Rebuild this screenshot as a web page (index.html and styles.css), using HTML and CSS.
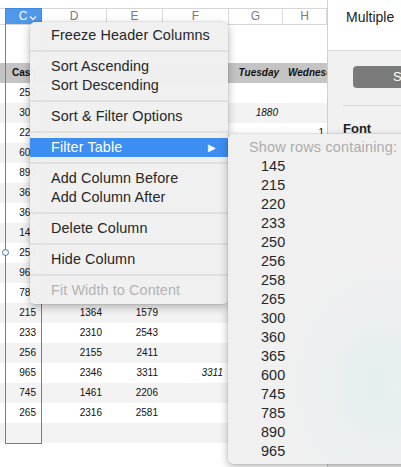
FILE: index.html
```html
<!DOCTYPE html>
<html>
<head>
<meta charset="utf-8">
<link rel="stylesheet" href="styles.css">
</head>
<body>
<div class="app">
  <div class="sheet">
    <div class="topgap"></div>
    <div class="grid colheads">
      <div class="ch"></div>
      <div class="ch ch-sel">C<svg class="chev" width="8" height="6" viewBox="0 0 8 6"><path d="M1 1.5 L4 4.5 L7 1.5" fill="none" stroke="#fff" stroke-width="1.1"/></svg></div>
      <div class="ch">D</div>
      <div class="ch">E</div>
      <div class="ch">F</div>
      <div class="ch">G</div>
      <div class="ch">H</div>
    </div>
    <div class="titlegap"></div>
    <div class="grid row hdr">
      <div></div><div class="l">Cash</div><div></div><div></div><div></div><div class="bi">Tuesday</div><div class="bi l">Wednesday</div>
    </div>
    <div class="grid row"><div></div><div>250</div><div></div><div></div><div></div><div></div><div></div></div>
    <div class="grid row alt"><div></div><div>300</div><div></div><div></div><div></div><div class="it">1880</div><div></div></div>
    <div class="grid row"><div></div><div>220</div><div></div><div></div><div></div><div></div><div class="h1">1</div></div>
    <div class="grid row alt"><div></div><div>600</div><div></div><div></div><div></div><div></div><div></div></div>
    <div class="grid row"><div></div><div>890</div><div></div><div></div><div></div><div></div><div></div></div>
    <div class="grid row alt"><div></div><div>360</div><div></div><div></div><div></div><div></div><div></div></div>
    <div class="grid row"><div></div><div>365</div><div></div><div></div><div></div><div></div><div></div></div>
    <div class="grid row alt"><div></div><div>145</div><div></div><div></div><div></div><div></div><div></div></div>
    <div class="grid row"><div></div><div>258</div><div></div><div></div><div></div><div></div><div></div></div>
    <div class="grid row alt"><div></div><div>965</div><div></div><div></div><div></div><div></div><div></div></div>
    <div class="grid row"><div></div><div>785</div><div></div><div></div><div></div><div></div><div></div></div>
    <div class="grid row alt"><div></div><div>215</div><div>1364</div><div>1579</div><div></div><div></div><div></div></div>
    <div class="grid row"><div></div><div>233</div><div>2310</div><div>2543</div><div></div><div></div><div></div></div>
    <div class="grid row alt"><div></div><div>256</div><div>2155</div><div>2411</div><div></div><div></div><div></div></div>
    <div class="grid row"><div></div><div>965</div><div>2346</div><div>3311</div><div class="it f">3311</div><div></div><div></div></div>
    <div class="grid row alt"><div></div><div>745</div><div>1461</div><div>2206</div><div></div><div></div><div></div></div>
    <div class="grid row"><div></div><div>265</div><div>2316</div><div>2581</div><div></div><div></div><div></div></div>
    <div class="grid row alt"><div></div><div></div><div></div><div></div><div></div><div></div><div></div></div>
    <div class="sel"></div>
    <div class="handle"></div>
  </div>
  <div class="panel">
    <div class="panel-top">Multiple</div>
    <div class="panel-body">
      <div class="pbtn">Style</div>
      <div class="pline"></div>
      <div class="plabel">Font</div>
    </div>
  </div>

  <div class="menu">
    <div class="mi">Freeze Header Columns</div>
    <div class="sep"></div>
    <div class="mi">Sort Ascending</div>
    <div class="mi">Sort Descending</div>
    <div class="sep"></div>
    <div class="mi">Sort &amp; Filter Options</div>
    <div class="sep"></div>
    <div class="mi hl">Filter Table<span class="tri">&#9654;</span></div>
    <div class="sep"></div>
    <div class="mi">Add Column Before</div>
    <div class="mi">Add Column After</div>
    <div class="sep"></div>
    <div class="mi">Delete Column</div>
    <div class="sep"></div>
    <div class="mi">Hide Column</div>
    <div class="sep"></div>
    <div class="mi dis">Fit Width to Content</div>
  </div>

  <div class="submenu">
    <div class="stitle">Show rows containing:</div>
    <div class="si">145</div>
    <div class="si">215</div>
    <div class="si">220</div>
    <div class="si">233</div>
    <div class="si">250</div>
    <div class="si">256</div>
    <div class="si">258</div>
    <div class="si">265</div>
    <div class="si">300</div>
    <div class="si">360</div>
    <div class="si">365</div>
    <div class="si">600</div>
    <div class="si">745</div>
    <div class="si">785</div>
    <div class="si">890</div>
    <div class="si">965</div>
  </div>
</div>
</body>
</html>
```

FILE: styles.css
```css
html, body {
  margin: 0;
  padding: 0;
  background: #fff;
}
body {
  font-family: "Liberation Sans", Arial, sans-serif;
}
.app {
  position: relative;
  display: flex;
  width: 401px;
  height: 467px;
  overflow: hidden;
  background: #fff;
}
.sheet {
  position: relative;
  width: 327px;
  flex: none;
  overflow: hidden;
}
.topgap { height: 8px; }
.titlegap { height: 38px; }
.grid {
  display: grid;
  grid-template-columns: 5px 37px 65px 56px 66px 54px 44px;
}
.colheads {
  height: 17px;
  box-sizing: border-box;
  border-top: 1px solid #d6d6d6;
  border-bottom: 1px solid #d6d6d6;
}
.ch {
  font-size: 12px;
  color: #7c7c7c;
  text-align: center;
  line-height: 15px;
  border-right: 1px solid #d9d9d9;
}
.ch:first-child { border-right: none; }
.ch-sel {
  background: #4f98ea;
  color: #fff;
  position: relative;
}
.chev {
  position: absolute;
  left: 24px;
  top: 6px;
}
.row {
  height: 20px;
  font-size: 10px;
  color: #111;
  line-height: 20px;
}
.row > div {
  text-align: right;
  padding-right: 5px;
  white-space: nowrap;
  overflow: hidden;
}
.row > div:nth-child(2) { padding-right: 6px; }
.row > div.l { text-align: left; padding-left: 7px; padding-right: 0; }
.row > div:last-child.l { padding-left: 5px; }
.row > div.f { padding-right: 6px; }
.row > div.h1 { padding-right: 3px; }
.alt { background: #f3f3f3; }
.hdr {
  background: #c4c4c4;
  font-weight: bold;
  color: #111;
}
.bi { font-style: italic; }
.row > div.bi { padding-right: 4px; }
.it { font-style: italic; }
.sel {
  position: absolute;
  left: 5px;
  top: 8px;
  width: 37px;
  height: 436px;
  box-sizing: border-box;
  border: 1px solid #3f88de;
}
.handle {
  position: absolute;
  left: 2px;
  top: 249px;
  width: 5px;
  height: 5px;
  border: 1px solid #3f6fc0;
  border-radius: 50%;
  background: #fff;
}
.panel {
  flex: 1;
  border-left: 1px solid #cfcfcf;
  display: flex;
  flex-direction: column;
  background: #f1f1f1;
}
.panel-top {
  height: 51px;
  box-sizing: border-box;
  background: #fff;
  border-bottom: 1px solid #d9d9d9;
  font-size: 14px;
  color: #222;
  padding-left: 18px;
  padding-top: 9px;
}
.panel-body {
  flex: 1;
  padding-top: 15px;
}
.pbtn {
  margin-left: 25px;
  width: 110px;
  height: 22px;
  border-radius: 4px;
  background: #7b7b7b;
  color: #fff;
  font-size: 13px;
  line-height: 22px;
  padding-left: 40px;
  box-sizing: border-box;
}
.pline {
  margin-left: 15px;
  margin-top: 17px;
  height: 1px;
  background: #d6d6d6;
}
.plabel {
  margin-left: 15px;
  margin-top: 15px;
  font-size: 13px;
  font-weight: bold;
  color: #222;
}
.menu {
  position: absolute;
  left: 30px;
  top: 22px;
  width: 198px;
  box-sizing: border-box;
  padding: 4px 0;
  background: rgba(240, 240, 240, 0.98);
  border-radius: 5px;
  box-shadow: 0 3px 10px rgba(0, 0, 0, 0.28), 0 0 0 0.5px rgba(0, 0, 0, 0.12);
  z-index: 2;
}
.mi {
  position: relative;
  height: 19px;
  line-height: 19px;
  padding-left: 21px;
  font-size: 14.4px;
  letter-spacing: 0.1px;
  color: #262626;
  white-space: nowrap;
}
.mi.hl {
  background: #3d8ef2;
  color: #fff;
}
.tri {
  position: absolute;
  right: 12px;
  top: 0;
  font-size: 10px;
}
.mi.dis { color: #b3b3b3; }
.sep {
  height: 2px;
  margin: 5px 0;
  background: #e0e0e0;
}
.submenu {
  position: absolute;
  left: 228px;
  top: 134px;
  width: 190px;
  height: 330px;
  box-sizing: border-box;
  padding-top: 4px;
  border-radius: 5px;
  background: radial-gradient(ellipse 90px 120px at 150px 250px, #e5eff0 0%, rgba(240, 240, 240, 0) 100%), #f0f0f0;
  box-shadow: 0 3px 10px rgba(0, 0, 0, 0.28), 0 0 0 0.5px rgba(0, 0, 0, 0.12);
  z-index: 3;
}
.stitle {
  height: 19px;
  line-height: 19px;
  padding-left: 21px;
  font-size: 14.4px;
  letter-spacing: 0.2px;
  color: #acacac;
  white-space: nowrap;
}
.si {
  height: 19px;
  line-height: 19px;
  padding-left: 33px;
  font-size: 14.4px;
  letter-spacing: 0.1px;
  color: #262626;
}
```
